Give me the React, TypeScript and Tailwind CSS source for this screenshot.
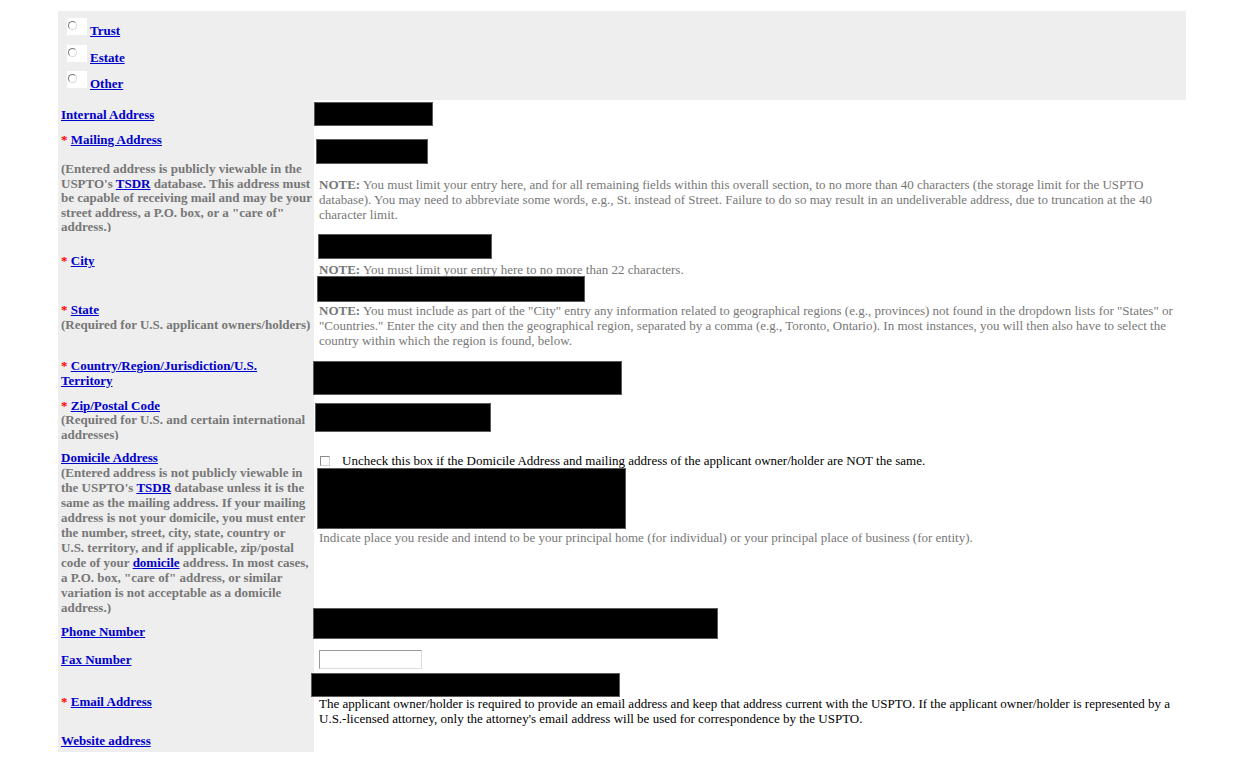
import React from "react";

const L = ({ children }: { children: React.ReactNode }) => (
  <a href="#" className="font-bold text-[#0000cc] underline">
    {children}
  </a>
);

const Star = () => <span className="text-[#ff0000] font-bold">* </span>;

const Redact = ({ className }: { className: string }) => (
  <div className={"bg-black border border-[#5a5a5a] " + className} />
);

const Radio = ({ label }: { label: string }) => (
  <div className="flex h-[26.5px] items-start">
    <div className="w-[20px] h-[17px] bg-white pt-[3px] pl-[1px]">
      <div className="w-[9px] h-[9px] rounded-full bg-white border border-t-[#7a7a7a] border-l-[#7a7a7a] border-b-[#d8d8d8] border-r-[#d8d8d8]" />
    </div>
    <div className="ml-[3px] mt-[5px] leading-[15px]">
      <L>{label}</L>
    </div>
  </div>
);

export default function App() {
  return (
    <div
      className="min-h-[758px] bg-white pt-[11px] pl-[58px] text-[13px] text-black"
      style={{ fontFamily: '"Liberation Serif", "Times New Roman", serif' }}
    >
      <div className="w-[1128px]">
        {/* Row 0: radio options */}
        <div className="flex h-[89px] bg-[#eeeeee]">
          <div className="w-[256px] pl-[9px] pt-[7px]">
            <Radio label="Trust" />
            <Radio label="Estate" />
            <Radio label="Other" />
          </div>
          <div className="flex-1" />
        </div>

        {/* Internal Address */}
        <div className="flex h-[30px]">
          <div className="w-[256px] bg-[#eeeeee] pl-[3px] pt-[7px] leading-[15px]">
            <L>Internal Address</L>
          </div>
          <div className="flex-1 pt-[2px]">
            <Redact className="w-[119px] h-[24px]" />
          </div>
        </div>

        {/* Mailing Address */}
        <div className="flex h-[102px]">
          <div className="w-[256px] bg-[#eeeeee] pl-[3px] pt-[2px]">
            <div className="leading-[15px]">
              <Star />
              <L>Mailing Address</L>
            </div>
            <div className="mt-[15px] font-bold text-[#777777] leading-[14.5px] whitespace-nowrap">
              <div>(Entered address is publicly viewable in the</div>
              <div>
                USPTO's <L>TSDR</L> database. This address must
              </div>
              <div>be capable of receiving mail and may be your</div>
              <div>street address, a P.O. box, or a "care of"</div>
              <div>address.)</div>
            </div>
          </div>
          <div className="flex-1">
            <Redact className="mt-[9px] ml-[2px] w-[112px] h-[25px]" />
            <div className="mt-[13px] ml-[5px] text-[#777777] leading-[15px] whitespace-nowrap">
              <div>
                <b>NOTE:</b> You must limit your entry here, and for all remaining fields within this overall
                section, to no more than 40 characters (the storage limit for the USPTO
              </div>
              <div>
                database). You may need to abbreviate some words, e.g., St. instead of Street. Failure to do so
                may result in an undeliverable address, due to truncation at the 40
              </div>
              <div>character limit.</div>
            </div>
          </div>
        </div>

        {/* City */}
        <div className="flex h-[43px]">
          <div className="w-[256px] bg-[#eeeeee] pl-[3px] pt-[21px] leading-[15px]">
            <Star />
            <L>City</L>
          </div>
          <div className="flex-1">
            <Redact className="mt-[2px] ml-[4px] w-[174px] h-[25px]" />
            <div className="mt-[3px] ml-[5px] text-[#777777] leading-[15px] whitespace-nowrap">
              <b>NOTE:</b> You must limit your entry here to no more than 22 characters.
            </div>
          </div>
        </div>

        {/* State */}
        <div className="flex h-[80px]">
          <div className="w-[256px] bg-[#eeeeee] pl-[3px] pt-[27px] leading-[15px]">
            <div>
              <Star />
              <L>State</L>
            </div>
            <div className="font-bold text-[#777777] whitespace-nowrap">
              (Required for U.S. applicant owners/holders)
            </div>
          </div>
          <div className="flex-1">
            <Redact className="mt-[1px] ml-[3px] w-[268px] h-[26px]" />
            <div className="mt-[1px] ml-[5px] text-[#777777] leading-[15px] whitespace-nowrap">
              <div>
                <b>NOTE:</b> You must include as part of the "City" entry any information related to
                geographical regions (e.g., provinces) not found in the dropdown lists for "States" or
              </div>
              <div>
                "Countries." Enter the city and then the geographical region, separated by a comma (e.g.,
                Toronto, Ontario). In most instances, you will then also have to select the
              </div>
              <div>country within which the region is found, below.</div>
            </div>
          </div>
        </div>

        {/* Country */}
        <div className="flex h-[43px]">
          <div className="w-[256px] bg-[#eeeeee] pl-[3px] pt-[4px] leading-[14.5px] whitespace-nowrap">
            <div>
              <Star />
              <L>Country/Region/Jurisdiction/U.S.</L>
            </div>
            <div>
              <L>Territory</L>
            </div>
          </div>
          <div className="flex-1">
            <Redact className="mt-[6px] -ml-px w-[309px] h-[34px]" />
          </div>
        </div>

        {/* Zip */}
        <div className="flex h-[42px]">
          <div className="w-[256px] bg-[#eeeeee] pl-[3px] pt-0 whitespace-nowrap">
            <div className="leading-[15px]">
              <Star />
              <L>Zip/Postal Code</L>
            </div>
            <div className="font-bold text-[#777777] leading-[14.5px]">
              <div>(Required for U.S. and certain international</div>
              <div>addresses)</div>
            </div>
          </div>
          <div className="flex-1">
            <Redact className="mt-[5px] ml-[1px] w-[176px] h-[29px]" />
          </div>
        </div>

        {/* Domicile */}
        <div className="flex h-[174px]">
          <div className="w-[256px] bg-[#eeeeee] pl-[3px] pt-[10px] whitespace-nowrap">
            <div className="leading-[15px]">
              <L>Domicile Address</L>
            </div>
            <div className="font-bold text-[#777777] leading-[15px]">
              <div>(Entered address is not publicly viewable in</div>
              <div>
                the USPTO's <L>TSDR</L> database unless it is the
              </div>
              <div>same as the mailing address. If your mailing</div>
              <div>address is not your domicile, you must enter</div>
              <div>the number, street, city, state, country or</div>
              <div>U.S. territory, and if applicable, zip/postal</div>
              <div>
                code of your <L>domicile</L> address. In most cases,
              </div>
              <div>a P.O. box, "care of" address, or similar</div>
              <div>variation is not acceptable as a domicile</div>
              <div>address.)</div>
            </div>
          </div>
          <div className="flex-1">
            <div className="mt-[13px] flex items-center h-[15px] whitespace-nowrap leading-[15px]">
              <div className="ml-[6px] w-[10px] h-[10px] bg-white border border-t-[#8a8a8a] border-l-[#8a8a8a] border-b-[#d0d0d0] border-r-[#d0d0d0]" />
              <span className="ml-[12px]">
                Uncheck this box if the Domicile Address and mailing address of the applicant owner/holder
                are NOT the same.
              </span>
            </div>
            <Redact className="ml-[3px] w-[309px] h-[61px]" />
            <div className="mt-[1px] ml-[5px] text-[#777777] leading-[15px] whitespace-nowrap">
              Indicate place you reside and intend to be your principal home (for individual) or your
              principal place of business (for entity).
            </div>
          </div>
        </div>

        {/* Phone */}
        <div className="flex h-[31px]">
          <div className="w-[256px] bg-[#eeeeee] pl-[3px] pt-[10px] leading-[15px]">
            <L>Phone Number</L>
          </div>
          <div className="flex-1">
            <Redact className="-mt-[6px] -ml-px w-[405px] h-[31px]" />
          </div>
        </div>

        {/* Fax */}
        <div className="flex h-[30px]">
          <div className="w-[256px] bg-[#eeeeee] pl-[3px] pt-[7px] leading-[15px]">
            <L>Fax Number</L>
          </div>
          <div className="flex-1">
            <div className="mt-[5px] ml-[5px] w-[103px] h-[19px] bg-white border border-t-[#9a9a9a] border-l-[#9a9a9a] border-b-[#dcdcdc] border-r-[#dcdcdc]" />
          </div>
        </div>

        {/* Email */}
        <div className="flex h-[53px]">
          <div className="w-[256px] bg-[#eeeeee] pl-[3px] pt-[19px] leading-[15px]">
            <Star />
            <L>Email Address</L>
          </div>
          <div className="flex-1">
            <Redact className="-mt-[2px] -ml-[3px] w-[309px] h-[24px]" />
            <div className="-mt-px ml-[5px] leading-[15px] whitespace-nowrap">
              <div>
                The applicant owner/holder is required to provide an email address and keep that address
                current with the USPTO. If the applicant owner/holder is represented by a
              </div>
              <div>
                U.S.-licensed attorney, only the attorney's email address will be used for correspondence by
                the USPTO.
              </div>
            </div>
          </div>
        </div>

        {/* Website */}
        <div className="flex h-[24px]">
          <div className="w-[256px] bg-[#eeeeee] pl-[3px] pt-[5px] leading-[15px]">
            <L>Website address</L>
          </div>
          <div className="flex-1" />
        </div>
      </div>
    </div>
  );
}
